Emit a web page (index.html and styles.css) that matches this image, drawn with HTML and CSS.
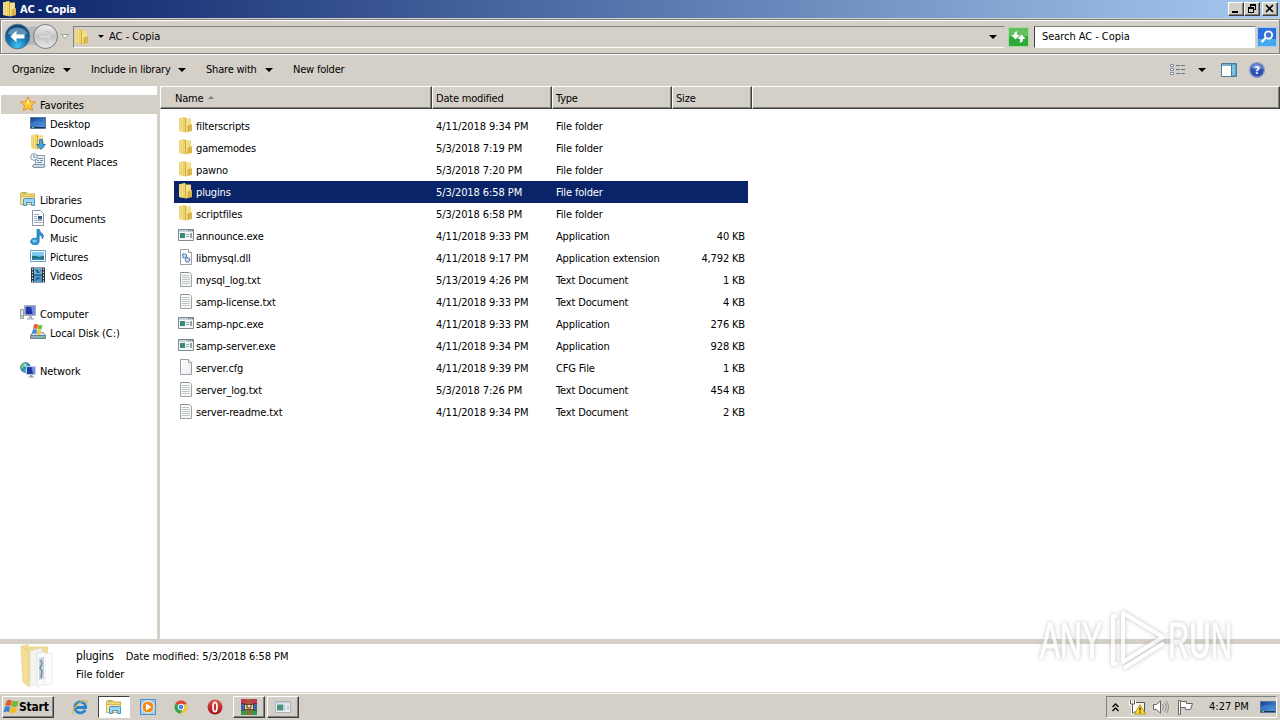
FILE: index.html
```
<!DOCTYPE html>
<html lang="en">
<head>
    <meta charset="UTF-8">
    <meta name="viewport" content="width=device-width, initial-scale=1.0">
    <title>AC - Copia</title>
    <link rel="stylesheet" href="styles.css">
</head>
<body>
    <!-- Shared icons -->
    <svg class="defs" width="0" height="0">
        <defs>
            <linearGradient id="gFolder" x1="0" x2="1"><stop offset="0" stop-color="#e3bd45"/><stop offset=".3" stop-color="#f9eaa0"/><stop offset=".55" stop-color="#e8cb5c"/><stop offset="1" stop-color="#efd985"/></linearGradient>
            <linearGradient id="gBlue" x1="0" x2="1" y2="1"><stop offset="0" stop-color="#173a86"/><stop offset=".5" stop-color="#2f6fc4"/><stop offset="1" stop-color="#5fa8e6"/></linearGradient>
            <linearGradient id="gPage" x2="1" y2="1"><stop offset="0" stop-color="#fff"/><stop offset="1" stop-color="#e9ecef"/></linearGradient>
            <radialGradient id="gBack" cx=".5" cy=".9" r=".8"><stop offset="0" stop-color="#42c5ee"/><stop offset=".5" stop-color="#1676b4"/><stop offset="1" stop-color="#104878"/></radialGradient>
            <linearGradient id="gFwd" x2="0" y2="1"><stop offset="0" stop-color="#f2f2f2"/><stop offset=".5" stop-color="#c5c5c5"/><stop offset="1" stop-color="#e8e8e8"/></linearGradient>
            <linearGradient id="gRed" x2="0" y2="1"><stop offset="0" stop-color="#e0564e"/><stop offset="1" stop-color="#a30d12"/></linearGradient>
        </defs>
        <symbol id="folder" viewBox="0 0 16 16">
            <path d="M1 1.500 7 0l1 1.500h5V7l1 .500V14l-6 1.500L1 14z" fill="#e9cc66"/>
            <path d="M1 1.500 4 .8V14.500L1 13.800z" fill="#f0da84"/>
            <path d="M3.500 1 7 0v14.500l-3.500-.5z" fill="url(#gFolder)"/>
            <path d="M8 2h4.500v11.500L8 14.500z" fill="#f4e08c"/>
            <path d="M7.500 1v14" stroke="#d3aa36"/>
            <path d="M9.500 9l3-2v7l-3 .8z" fill="#d8b240"/><path d="M13.300 8v6" stroke="#cfa736" stroke-width=".8"/>
        </symbol>
        <symbol id="app" viewBox="0 0 16 16">
            <path d="M.5 2.500h15v11H.5z" fill="#f4f6f7" stroke="#7e8993"/>
            <path d="M1 3h14v2H1z" fill="#c9d0d6"/>
            <path d="M10 3.500h1m1 0h1m1 0h1" stroke="#566a7c"/>
            <path d="M2 6h5v5H2z" fill="#3b8b72"/>
            <path d="M8 7.500h3M8 9.500h3" stroke="#94a8bd"/>
            <path d="M13 6v5" stroke="#314f5c"/>
        </symbol>
        <symbol id="page" viewBox="0 0 16 16">
            <path d="M2.500.5h8l3 3v12h-11z" fill="url(#gPage)" stroke="#9b9fa3"/>
            <path d="M10.500.5v3h3" fill="#fff" stroke="#9b9fa3"/>
        </symbol>
        <symbol id="txt" viewBox="0 0 16 16">
            <path d="M2.500 1.500h9l2 2v12h-11z" fill="#f5f7f7" stroke="#9da2a5"/>
            <path d="M3 1.500h8" stroke="#777d81" stroke-dasharray="1 1"/>
            <path d="M4 4.500h7M4 6.500h8M4 8.500h8M4 10.500h8M4 12.500h8" stroke="#c1c8cc"/>
        </symbol>
        <symbol id="dll" viewBox="0 0 16 16">
            <path d="M2.500.5h8l3 3v12h-11z" fill="#fff" stroke="#9b9fa3"/>
            <path d="M10.500.5v3h3" fill="#fff" stroke="#9b9fa3"/>
            <circle cx="6.500" cy="6.800" r="2" fill="#d7e6f5" stroke="#426ba4" stroke-width="1.300" stroke-dasharray="1.200 .5"/>
            <circle cx="9.500" cy="10.800" r="2.200" fill="#d7e6f5" stroke="#426ba4" stroke-width="1.300" stroke-dasharray="1.200 .5"/>
        </symbol>
        <symbol id="star" viewBox="0 0 16 16">
            <path d="M8 .8l2.100 4.800 5.300.4-4 3.500 1.200 5.300L8 12l-4.600 2.800 1.200-5.300L.6 6l5.300-.4z" fill="#ffcb38" stroke="#e7912b"/>
            <path d="M8 3l1.300 3.600-1.300 1.600L6.600 6.600z" fill="#fff3a8"/>
        </symbol>
        <symbol id="desktop" viewBox="0 0 16 16">
            <path d="M.5 2.500h15v11H.5z" fill="url(#gBlue)" stroke="#53779f"/>
            <path d="M1 8q5-4 14 0v3H1z" fill="#4687d1" opacity=".6"/>
            <path d="M1 12.500h14" stroke="#20324f"/><path d="M2 12.500h2" stroke="#6bc36a"/>
        </symbol>
        <symbol id="downarrow" viewBox="0 0 16 16">
            <path d="M9.500 5.500h3v5h3L11 15.500l-4.500-5h3z" fill="#3fa5e3" stroke="#1f70b4" stroke-width=".8"/>
        </symbol>
        <symbol id="recent" viewBox="0 0 16 16">
            <path d="M5.500 2.500h9v9h-9z" fill="#e8eef3" stroke="#8b98a4"/>
            <path d="M3.500 11.500h11q1.500 3-1 3h-10q-2-1.500 0-3z" fill="#ccd8e2" stroke="#8797a5"/>
            <path d="M8 5.500h5M7 7.500h2M10 7.500h3M7 9.500h5" stroke="#6e91b0"/>
            <circle cx="4" cy="4" r="3.300" fill="#f4f8fb" stroke="#8296a8"/><path d="M4 2v2.300h1.500" fill="none" stroke="#395d7f" stroke-width=".8"/>
        </symbol>
        <symbol id="library" viewBox="0 0 16 16">
            <path d="M.5 2.500l1-1h5l1 1.500h7v4H.5z" fill="#f4d975" stroke="#d1a93d"/>
            <path d="M2 3h4" stroke="#6fc287"/>
            <path d="M.5 5.500h14v8H.5z" fill="#f8e7a1" stroke="#d6b65a"/>
            <path d="M3.500 14.500v-6q0-1 1-1h9q1 0 1 1v6h-3v-3h-5v3z" fill="#9bd5f0" stroke="#4694c3"/>
        </symbol>
        <symbol id="doc" viewBox="0 0 16 16">
            <path d="M2.500.5h8l3 3v12h-11z" fill="#fff" stroke="#8795a3"/>
            <path d="M4 4.500h5M4 6.500h3M4 8.500h3M4 10.500h8M4 12.500h8" stroke="#96acc4"/>
            <path d="M8 6h4v3.500H8z" fill="#365a84"/>
        </symbol>
        <symbol id="music" viewBox="0 0 16 16">
            <path d="M7 0h2.200q.3 3 3 4.500 2.500 2 .3 5.500 0-3.500-3.300-4v6.500a4.300 3.500 0 1 1-2.200-3z" fill="#2b91d1" stroke="#1d6eae" stroke-width=".6"/>
            <ellipse cx="4.600" cy="12" rx="2.300" ry="1.500" fill="#7fcdf3"/>
        </symbol>
        <symbol id="picture" viewBox="0 0 16 16">
            <path d="M.5 2.500h15v11H.5z" fill="#fff" stroke="#6c9fbe"/>
            <path d="M2 4h12v8H2z" fill="#7ecbed"/><path d="M2 8q5-1 7 1 3-1 5-1v4H2z" fill="#1f6f76"/><path d="M2 10.500q6-1 12 .5v1H2z" fill="#2d83bf"/>
        </symbol>
        <symbol id="video" viewBox="0 0 16 16">
            <path d="M1 .5h14v15H1z" fill="#2c3440"/>
            <path d="M4 1h8v6.500H4z" fill="#68b6e0"/><path d="M4 8.500h8V15H4z" fill="#4d9bd4"/>
            <path d="M5 2l3 1 2 3H7zM5 14l2-4 4 1z" fill="#255b8c"/><path d="M9 2l2 1v3zM9 11l2 2v1z" fill="#a2694f"/>
            <path d="M2.500 1.500v14M13.500 1.500v14" stroke="#dfe7ec" stroke-dasharray="1.500 1.500"/>
        </symbol>
        <symbol id="computer" viewBox="0 0 16 16">
            <path d="M.5 4.500h3v9h-3z" fill="#dfe3e6" stroke="#969da4"/><path d="M1 11h2" stroke="#5eaf4b"/>
            <path d="M4.500.5h11v10h-11z" fill="#dfe5ee" stroke="#a4acba"/>
            <path d="M5.500 1.500h9v8h-9z" fill="#1d35a5"/><path d="M11 1.500h3.500v8h-2z" fill="#6c8be4"/>
            <path d="M9 11h3v2h2v1.500H7V13h2z" fill="#abb5c2"/>
        </symbol>
        <symbol id="disk" viewBox="0 0 16 16">
            <path d="M2.500 8.500h11l2 3H.5z" fill="#d9e2e6" stroke="#8299a4"/>
            <path d="M.5 11.500h15v3H.5z" fill="#8eb0bd" stroke="#5f8392"/><path d="M11 13h3" stroke="#62d447"/>
            <path d="M4 .5q2-1 4 0L7.200 5Q5 4 3 5z" fill="#eb5b2a"/><path d="M8.400.7q2 1 4.300 0L11.500 5q-2 1-3.900 0z" fill="#76b83d"/>
            <path d="M2.800 5.500q2-1 4.200 0L6.200 10Q4 9 1.800 10z" fill="#3e8cdb"/><path d="M7.400 5.600q2 1 4 0l-1 4.600q-2 1-3.800 0z" fill="#f6c432"/>
        </symbol>
        <symbol id="network" viewBox="0 0 16 16">
            <circle cx="5.500" cy="5.500" r="5" fill="#2d92c0" stroke="#1c6695" stroke-width=".6"/>
            <path d="M2 2q3-2 5 0L4 5 2 7 1 5zM4 8l3-1-1 3z" fill="#6ec77b"/><path d="M4 2l3 1-2 2z" fill="#c4edf9"/>
            <path d="M6.500 4.500h9v8h-9z" fill="#1b38ac" stroke="#c7d0e2"/><path d="M11.500 5h3.500v7h-2z" fill="#718ee7"/>
            <path d="M10 13h2.500v1.500H14v1H8.500v-1H10z" fill="#8f9db0"/>
        </symbol>
        <symbol id="flag" viewBox="0 0 16 16">
            <path d="M3.500 2q2.500-2 5.200-.5L7.500 7Q5 6 2.300 7z" fill="#e8592a"/><path d="M9.200 1.700q3 1.500 6.500 0L14.300 7.200q-3 1.500-6.300 0z" fill="#72b73a"/>
            <path d="M2 7.800q2.500-1.200 5.200 0L6 13.200q-2-1.500-5.500 0z" fill="#3a7fd4"/><path d="M7.800 8q3 1.500 6.300 0l-1.300 5.500q-3 1.500-6.300 0z" fill="#f4bb26"/>
        </symbol>
    </svg>

    <div class="titlebar">
        <svg class="icon"><use href="#folder"/></svg>
        <span class="title">AC - Copia</span>
        <div class="winButtons">
            <span class="winBtn"><svg width="13" height="11"><path d="M3 8h6v2H3z"/></svg></span>
            <span class="winBtn"><svg width="13" height="11"><path d="M5 1h6v2H5zM5 1h1v3H5zM10 1h1v6h-1zM8 6h3v1H8zM3 4h6v2H3zM3 4h1v6H3zM8 4h1v6H8zM3 9h6v1H3z"/></svg></span>
            <span class="winBtn close"><svg width="13" height="11"><path d="M3 2l7 7M10 2l-7 7" stroke="#000" stroke-width="1.600"/></svg></span>
        </div>
    </div>

    <div class="addressRow">
        <svg class="navButtons" width="68" height="29" viewBox="0 0 68 29">
            <path d="M14 3q15 4 27 0v22q-14-5-27 0z" fill="#b4b7bc"/>
            <circle cx="14.500" cy="14.500" r="12.300" fill="url(#gBack)" stroke="#56758c"/>
            <path d="M4.500 12a10.500 9.500 0 0 1 20 0q-10 3-20 0z" fill="#8cb5d1" opacity=".6"/>
            <path d="M7.500 14.500l6-6v4h8v4h-8v4z" fill="#fff"/>
            <circle cx="42.500" cy="14.500" r="12" fill="url(#gFwd)" stroke="#77797c"/>
            <path d="M49.500 14.500l-6-6v4h-8v4h8v4z" fill="#d4d4d4" stroke="#b9b9b9" stroke-width=".6"/>
            <path d="M58.500 12.500h7l-3.500 4z" fill="#fff" stroke="#8c8c8c" stroke-width=".8"/>
        </svg>
        <div class="addressBox">
            <svg class="icon"><use href="#folder"/></svg>
            <i class="arrow small"></i>
            <span class="path">AC - Copia</span>
            <i class="arrow end"></i>
        </div>
        <svg class="refresh" width="21" height="20" viewBox="0 0 21 20">
            <path d="M.5.5h20v19H.5z" fill="#2ea836" stroke="#a7dca1"/><path d="M1 1h19v8q-9 4-19 0z" fill="#63c05f"/>
            <path d="M9.500 4.500Q6 4 6 8H3.500l4 4.500 4-4.500H9q-.5-2 .5-3.500z" fill="#fff"/><path d="M11.500 15.500q3.500.5 3.500-3.500h2.500l-4-4.500-4 4.500H12q.5 2-.5 3.500z" fill="#fff"/>
        </svg>
        <div class="searchBox">Search AC - Copia</div>
        <svg class="searchBtn" width="20" height="20" viewBox="0 0 20 20">
            <path d="M0 0h20v20H0z" fill="#2c6edb"/><path d="M0 12h20v8H0z" fill="#43a8ee"/><path d="M.5.5h19v19H.5z" fill="none" stroke="#a9cdf4"/>
            <circle cx="11.500" cy="8" r="3.700" fill="#3c75d5" stroke="#fff" stroke-width="1.800"/><path d="M8.800 10.800l-4.300 4.300" stroke="#fff" stroke-width="2.200"/>
        </svg>
    </div>

    <div class="toolbar">
        <span class="tool organize">Organize<i class="arrow"></i></span>
        <span class="tool include">Include in library<i class="arrow"></i></span>
        <span class="tool share">Share with<i class="arrow"></i></span>
        <span class="tool">New folder</span>
        <div class="toolIcons">
            <svg width="16" height="14" viewBox="0 0 16 14"><path d="M.5 1.500h3v2h-3zM.5 5.500h3v2h-3zM.5 9.500h3v2h-3z" fill="#fff" stroke="#7c8da4"/><path d="M6 2.500h4M11 2.500h4M6 6.500h4M11 6.500h4M6 10.500h4M11 10.500h4" stroke="#6b7480"/></svg>
            <i class="arrow view"></i>
            <svg class="preview" width="16" height="14" viewBox="0 0 16 14"><path d="M.5.5h15v13H.5z" fill="#fff" stroke="#4b7a9c"/><path d="M1 2h10" stroke="#7caac9" stroke-width="2"/><path d="M10.500 1h4.500v12h-4.500z" fill="#7bc3e6" stroke="#4b7a9c"/></svg>
            <svg class="help" width="16" height="16" viewBox="0 0 16 16"><circle cx="8" cy="8" r="7.300" fill="#2c50b4" stroke="#8a9bc4" stroke-width="1.400"/><path d="M2.500 6a5.600 5 0 0 1 11 0q-5 3-11 0z" fill="#6d8edb"/><text x="8" y="12" class="helpMark">?</text></svg>
        </div>
    </div>

    <div class="main">
        <div class="sidebar">
            <div class="group selected"><svg class="icon"><use href="#star"/></svg><span>Favorites</span></div>
            <div class="item"><svg class="icon"><use href="#desktop"/></svg><span>Desktop</span></div>
            <div class="item"><svg class="icon"><use href="#folder"/><use href="#downarrow"/></svg><span>Downloads</span></div>
            <div class="item"><svg class="icon"><use href="#recent"/></svg><span>Recent Places</span></div>
            <div class="group spaced"><svg class="icon"><use href="#library"/></svg><span>Libraries</span></div>
            <div class="item"><svg class="icon"><use href="#doc"/></svg><span>Documents</span></div>
            <div class="item"><svg class="icon"><use href="#music"/></svg><span>Music</span></div>
            <div class="item"><svg class="icon"><use href="#picture"/></svg><span>Pictures</span></div>
            <div class="item"><svg class="icon"><use href="#video"/></svg><span>Videos</span></div>
            <div class="group spaced"><svg class="icon"><use href="#computer"/></svg><span>Computer</span></div>
            <div class="item"><svg class="icon"><use href="#disk"/></svg><span>Local Disk (C:)</span></div>
            <div class="group spaced"><svg class="icon"><use href="#network"/></svg><span>Network</span></div>
        </div>

        <div class="content">
            <div class="columns">
                <div class="column name">Name<i class="sort"></i></div>
                <div class="column">Date modified</div>
                <div class="column">Type</div>
                <div class="column">Size</div>
                <div class="column"></div>
            </div>
            <div class="files">
                <div class="file"><svg class="icon"><use href="#folder"/></svg><span>filterscripts</span><span class="date">4/11/2018 9:34 PM</span><span>File folder</span><span class="size"></span></div>
                <div class="file"><svg class="icon"><use href="#folder"/></svg><span>gamemodes</span><span class="date">5/3/2018 7:19 PM</span><span>File folder</span><span class="size"></span></div>
                <div class="file"><svg class="icon"><use href="#folder"/></svg><span>pawno</span><span class="date">5/3/2018 7:20 PM</span><span>File folder</span><span class="size"></span></div>
                <div class="file active"><svg class="icon"><use href="#folder"/></svg><span>plugins</span><span class="date">5/3/2018 6:58 PM</span><span>File folder</span><span class="size"></span></div>
                <div class="file"><svg class="icon"><use href="#folder"/></svg><span>scriptfiles</span><span class="date">5/3/2018 6:58 PM</span><span>File folder</span><span class="size"></span></div>
                <div class="file"><svg class="icon"><use href="#app"/></svg><span>announce.exe</span><span class="date">4/11/2018 9:33 PM</span><span>Application</span><span class="size">40 KB</span></div>
                <div class="file"><svg class="icon"><use href="#dll"/></svg><span>libmysql.dll</span><span class="date">4/11/2018 9:17 PM</span><span>Application extension</span><span class="size">4,792 KB</span></div>
                <div class="file"><svg class="icon"><use href="#txt"/></svg><span>mysql_log.txt</span><span class="date">5/13/2019 4:26 PM</span><span>Text Document</span><span class="size">1 KB</span></div>
                <div class="file"><svg class="icon"><use href="#txt"/></svg><span>samp-license.txt</span><span class="date">4/11/2018 9:33 PM</span><span>Text Document</span><span class="size">4 KB</span></div>
                <div class="file"><svg class="icon"><use href="#app"/></svg><span>samp-npc.exe</span><span class="date">4/11/2018 9:33 PM</span><span>Application</span><span class="size">276 KB</span></div>
                <div class="file"><svg class="icon"><use href="#app"/></svg><span>samp-server.exe</span><span class="date">4/11/2018 9:34 PM</span><span>Application</span><span class="size">928 KB</span></div>
                <div class="file"><svg class="icon"><use href="#page"/></svg><span>server.cfg</span><span class="date">4/11/2018 9:39 PM</span><span>CFG File</span><span class="size">1 KB</span></div>
                <div class="file"><svg class="icon"><use href="#txt"/></svg><span>server_log.txt</span><span class="date">5/3/2018 7:26 PM</span><span>Text Document</span><span class="size">454 KB</span></div>
                <div class="file"><svg class="icon"><use href="#txt"/></svg><span>server-readme.txt</span><span class="date">4/11/2018 9:34 PM</span><span>Text Document</span><span class="size">2 KB</span></div>
            </div>
        </div>
    </div>

    <div class="details">
        <svg class="bigFolder" width="36" height="46" viewBox="0 0 36 46">
            <path d="M1 2l7-2 1 2.500h19V12L10 41z" fill="#efdc90"/>
            <path d="M10 7l12-3v35l-12 3z" fill="#f3f3f2" stroke="#dededb" stroke-width=".6"/>
            <path d="M17 9l9-1v32l-9 3z" fill="#f8fafb" stroke="#d3d6d9" stroke-width=".6"/>
            <path d="M19 14l5-1v22l-5 1z" fill="#c6d4df"/><path d="M21 16l1 4-2 4 2 3-1 7" fill="none" stroke="#718da6" stroke-width="1.500"/>
            <path d="M25 10l7-1v31l-7 1z" fill="#fdfdfd" stroke="#e2e4e6" stroke-width=".6"/>
            <path d="M1 2l8 6v35l-6-5z" fill="#f2df95" stroke="#dfc875" stroke-width=".6"/>
        </svg>
        <div class="info">
            <div><span class="itemName">plugins</span>Date modified: <span class="date">5/3/2018 6:58 PM</span></div>
            <div>File folder</div>
        </div>
    </div>

    <div class="taskbar">
        <div class="start"><svg class="icon"><use href="#flag"/></svg>Start</div>
        <div class="task"><svg class="icon" viewBox="0 0 16 16"><path d="M13.200 11a5.500 5.500 0 1 1 .4-4.300v1.800H4.500" fill="none" stroke="#2584d2" stroke-width="2.800"/><path d="M1.500 14.500Q-1 12 5 6t10-4q1 1-1 3.500" fill="none" stroke="#e4b13a" stroke-width="1.100"/></svg></div>
        <div class="task pressed"><svg class="icon"><use href="#library"/></svg></div>
        <div class="task"><svg class="icon" viewBox="0 0 16 16"><path d="M.5.500h15v15H.5z" fill="#9fcdf0" stroke="#4b8fce"/><circle cx="8" cy="8" r="6" fill="#f28a1e" stroke="#fff3df"/><path d="M6 4.500l5.500 3.500L6 11.500z" fill="#fff"/></svg></div>
        <div class="task"><svg class="icon chrome" viewBox="0 0 16 16"><circle cx="8" cy="8" r="6.500" fill="#f5c433"/><path d="M8 8L2.400 4.700A6.500 6.500 0 0 1 13.900 5.300H8z" fill="#dc4437"/><path d="M8 8L2.400 4.700a6.500 6.500 0 0 0 5 9.800L10.500 9z" fill="#30a152"/><circle cx="8" cy="8" r="2.900" fill="#4584e9" stroke="#fff"/></svg></div>
        <div class="task"><svg class="icon" viewBox="0 0 16 16"><circle cx="8" cy="8" r="7.500" fill="url(#gRed)"/><ellipse cx="8" cy="8" rx="2" ry="4.700" fill="#c9302f" stroke="#fff" stroke-width="1.700"/></svg></div>
        <div class="task raised"><svg class="icon" viewBox="0 0 16 16"><path d="M0 0h16v5H0z" fill="#c23a52"/><path d="M0 5.500h16v5H0z" fill="#3a66bd"/><path d="M0 11h16v5H0z" fill="#349a4c"/><path d="M6 0h4v16H6z" fill="#a5602f"/><path d="M3.500 5.500h9v5h-9z" fill="#e7dcb4" stroke="#6b4426"/><path d="M6 6v3h4V6" fill="none" stroke="#4b3429"/><path d="M0 5h4M12 5h4M0 11h4M12 11h4" stroke="#2a2238"/></svg></div>
        <div class="task raised last"><svg class="icon" viewBox="0 0 16 16"><path d="M.5 2.500h15v11H.5z" fill="#eef2f4" stroke="#a6b3bd"/><path d="M1 3h14v1.500H1z" fill="#c5d2dc"/><path d="M2 5.500h6v6H2z" fill="#4c9384"/><path d="M8 5.500h2.500v6H8z" fill="#b9cddb"/><path d="M13 6v5" stroke="#8ba4b4"/></svg></div>
        <div class="tray">
            <svg class="chevrons" width="7" height="9" viewBox="0 0 7 9"><path d="M.5 4l3-3 3 3M.5 8l3-3 3 3" fill="none" stroke="#000" stroke-width="1.300"/></svg>
            <svg class="net" width="17" height="16" viewBox="0 0 17 16"><path d="M4.500 3.500h11v9h-11z" fill="#f5f5f5" stroke="#555"/><path d="M1.500 1v4h4V1M3.500 5v9h5M3.500 10h3" fill="none" stroke="#fff" stroke-width="3"/><path d="M1.500 1v4h4V1M3.500 5v9h5" fill="none" stroke="#555"/><path d="M11 5.500L16.500 15h-11z" fill="#ffd92e" stroke="#b28a00" stroke-width=".8"/><path d="M11 8.500v3M11 12.500v1.300" stroke="#222" stroke-width="1.300"/></svg>
            <svg class="sound" width="17" height="14" viewBox="0 0 17 14"><path d="M.5 4.500h3L7.500.8v12.400l-4-3.700h-3z" fill="#fff" stroke="#666"/><path d="M9.500 4q2 3 0 6M11.500 2.500q3.500 4.500 0 9M13.500 1q4 6 0 12" fill="none" stroke="#888" stroke-width=".9"/></svg>
            <svg class="action" width="16" height="15" viewBox="0 0 16 15"><path d="M.5.500h2v14h-2z" fill="#fff" stroke="#666"/><path d="M2.500 1.500h6v2h6l-2 6h-5v-2h-5z" fill="#fff" stroke="#666"/></svg>
            <span class="clock">4:27 PM</span>
            <svg class="icon"><use href="#desktop"/></svg>
        </div>
    </div>

    <!-- Watermark over the window -->
    <svg class="watermark" width="220" height="84" viewBox="0 0 220 84">
        <text x="10" y="58" textLength="62" lengthAdjust="spacingAndGlyphs">ANY</text>
        <path d="M87 16h-4v48h4M93 50V13l40 24-40 25V50M94 68l40-25"/>
        <text x="138" y="58" textLength="64" lengthAdjust="spacingAndGlyphs">RUN</text>
    </svg>
</body>
</html>
```

FILE: styles.css
```
* {
    box-sizing: border-box;
}

body {
    margin: 0;
    width: 1280px;
    height: 720px;
    overflow: hidden;
    display: flex;
    flex-direction: column;
    position: relative;
    background: #d4d0c8;
    color: #000;
    font-family: "DejaVu Sans Condensed", "DejaVu Sans", sans-serif;
    font-size: 11px;
    letter-spacing: -0.32px;
    line-height: 14px;
    white-space: nowrap;
}

.defs {
    position: absolute;
}

.icon {
    width: 16px;
    height: 16px;
    flex: none;
}

.date {
    letter-spacing: -0.08px;
}

.arrow {
    flex: none;
    width: 0;
    height: 0;
    border-left: 4px solid transparent;
    border-right: 4px solid transparent;
    border-top: 4px solid #000;
}

/* Title bar */
.titlebar {
    display: flex;
    align-items: center;
    height: 18px;
    flex: none;
    padding: 0 2px;
    background: linear-gradient(to right, #0a246a, #a6caf0);
}

.title {
    margin-left: 2px;
    padding-top: 1px;
    color: #fff;
    font-weight: bold;
    letter-spacing: -0.1px;
}

.winButtons {
    display: flex;
    margin-left: auto;
}

.winBtn {
    width: 16px;
    height: 14px;
    background: #d4d0c8;
    border: 1px solid;
    border-color: #fff #404040 #404040 #fff;
    box-shadow: inset -1px -1px #808080;
}

.winBtn svg {
    display: block;
}

.winBtn.close {
    margin-left: 2px;
}

/* Address bar */
.addressRow {
    display: flex;
    align-items: center;
    height: 35px;
    flex: none;
    margin-top: 1px;
    padding: 0 1px 0 2px;
    border: 1px solid #808080;
    box-shadow: inset 1px 1px #fff, 0 1px #fff;
}

.addressBox {
    display: flex;
    align-items: center;
    width: 932px;
    height: 22px;
    margin-left: 2px;
    border: 1px solid;
    border-color: #808080 #d4d0c8 #fff #808080;
}

.arrow.small {
    margin: 0 5px 0 8px;
    border-width: 3px 3px 0;
}

.arrow.end {
    margin-left: auto;
    margin-right: 7px;
}

.refresh {
    margin-left: 3px;
}

.searchBox {
    width: 222px;
    height: 22px;
    margin-left: 5px;
    padding: 3px 0 0 7px;
    background: #fff;
    border: 1px solid;
    border-color: #808080 #d4d0c8 #fff #404040;
    letter-spacing: -0.05px;
}

.searchBtn {
    margin-left: 1px;
}

.path {
    letter-spacing: 0;
}

/* Toolbar */
.toolbar {
    display: flex;
    align-items: center;
    height: 32px;
    flex: none;
    padding: 0 15px 0 12px;
}

.tool {
    display: flex;
    align-items: center;
    letter-spacing: -0.2px;
}

.tool .arrow {
    margin-left: auto;
}

.organize {
    width: 59px;
    margin-right: 20px;
}

.include {
    width: 95px;
    margin-right: 20px;
}

.share {
    width: 67px;
    margin-right: 20px;
}

.toolIcons {
    display: flex;
    align-items: center;
    margin-left: auto;
}

.arrow.view {
    margin: 0 15px 0 12px;
}

.help {
    margin-left: 12px;
}

.helpMark {
    fill: #fff;
    font-size: 11px;
    font-weight: bold;
    text-anchor: middle;
    letter-spacing: 0;
}

/* Folder tree */
.main {
    display: flex;
    height: 553px;
    flex: none;
}

.sidebar {
    width: 160px;
    padding: 9px 0 0 1px;
    background: #fff;
    border-right: 3px solid #d4d0c8;
    letter-spacing: -0.1px;
}

.group,
.item {
    display: flex;
    align-items: center;
    gap: 4px;
    height: 19px;
    padding-left: 19px;
}

.item {
    padding-left: 29px;
}

.group .icon,
.item .icon {
    margin-top: -1px;
}

.group span,
.item span {
    padding-top: 2px;
}

.selected {
    background: #d4d0c8;
}

.spaced {
    margin-top: 19px;
}

/* File list */
.content {
    flex: 1;
    background: #fff;
}

.columns {
    display: grid;
    grid-template-columns: 272px 120px 120px 80px 1fr;
    height: 23px;
    letter-spacing: -0.2px;
}

.column {
    display: flex;
    align-items: center;
    padding: 2px 0 0 3px;
    background: #d4d0c8;
    border: 1px solid;
    border-color: #fff #404040 #404040 #fff;
    box-shadow: inset -1px -1px #808080;
}

.column.name {
    padding-left: 14px;
}

.sort {
    margin: -3px 0 0 5px;
    border-left: 3px solid transparent;
    border-right: 3px solid transparent;
    border-bottom: 3px solid #808080;
}

.files {
    padding: 6px 0 0 14px;
}

.file {
    display: grid;
    grid-template-columns: 18px 240px 120px 120px 69px;
    align-items: center;
    width: 574px;
    height: 22px;
    padding-left: 4px;
    letter-spacing: -0.15px;
}

.file span {
    padding-top: 2px;
}

.file .date {
    letter-spacing: -0.08px;
}

.file .icon {
    margin-top: -3px;
}

.file .size {
    text-align: right;
}

.active {
    background: #0a246a;
    color: #fff;
}

/* Details pane */
.details {
    display: flex;
    height: 54px;
    flex: none;
    padding-left: 20px;
    background: #fff;
    border-top: 5px solid #d4d0c8;
    border-bottom: 1px solid #d4d0c8;
}

.info {
    padding: 3px 0 0 20px;
    line-height: 18px;
    letter-spacing: 0;
}

.itemName {
    margin-right: 12px;
    font-size: 12px;
    letter-spacing: -0.2px;
}

/* Taskbar */
.taskbar {
    display: flex;
    align-items: center;
    flex: 1;
    padding: 0 3px 0 2px;
    border-top: 1px solid #fff;
}

.start,
.raised {
    border: 1px solid;
    border-color: #fff #404040 #404040 #fff;
    box-shadow: inset -1px -1px #808080;
}

.start {
    display: flex;
    align-items: center;
    width: 52px;
    height: 22px;
    margin-right: 10px;
    font-size: 12px;
    font-weight: bold;
    letter-spacing: -0.2px;
}

.task {
    display: flex;
    align-items: center;
    justify-content: center;
    width: 32px;
    height: 22px;
    margin-right: 1.8px;
}

.pressed {
    background: #fff;
    border: 1px solid;
    border-color: #404040 #fff #fff #404040;
}

.tray {
    display: flex;
    align-items: center;
    width: 171px;
    height: 22px;
    margin-left: auto;
    padding-left: 5px;
    border: 1px solid;
    border-color: #808080 #fff #fff #808080;
}

.net {
    margin-left: 10px;
}

.sound {
    margin-left: 7px;
}

.action {
    margin-left: 8px;
}

.clock {
    margin: 0 11px 0 15px;
    letter-spacing: 0;
}

.watermark {
    position: absolute;
    left: 1030px;
    top: 600px;
    opacity: 0.75;
    filter: drop-shadow(0 0 2px #aaa);
}

.watermark text {
    fill: #fff;
    font-family: "Liberation Sans", Arial, sans-serif;
    font-size: 50px;
    letter-spacing: 0;
    stroke: #fff;
    stroke-width: 1;
}

.watermark path {
    fill: none;
    stroke: #fff;
    stroke-width: 4;
    stroke-linejoin: round;
}
```
